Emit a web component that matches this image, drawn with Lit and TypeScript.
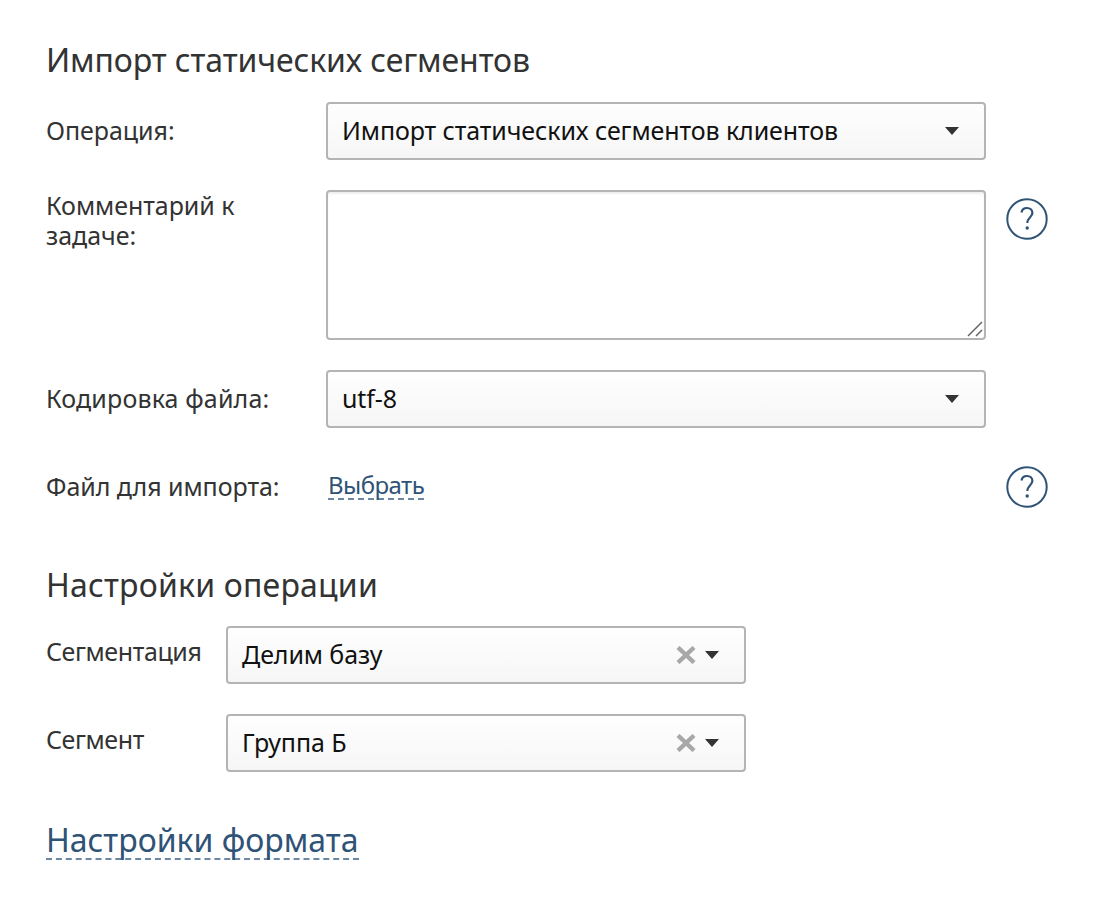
import { LitElement, html, css, svg } from "lit";
import { customElement } from "lit/decorators.js";

const caret = svg`<svg class="caret" width="14" height="8" viewBox="0 0 14 8"><path d="M0 0H14L7 8Z" fill="#333"/></svg>`;
const help = html`<svg class="help" width="42" height="42" viewBox="0 0 42 42">
  <circle cx="21" cy="21" r="19.7" fill="none" stroke="#2f5377" stroke-width="2"/>
  <path d="M15.5 14.5C16 11.5 18.2 10 21 10C24 10 26.4 12 26.4 15C26.4 19 21.3 19.6 21.3 25" fill="none" stroke="#2f5377" stroke-width="2.2"/>
  <circle cx="21.2" cy="30" r="1.7" fill="#2f5377"/>
</svg>`;

@customElement("app-root")
export class AppRoot extends LitElement {
  static styles = css`
    :host { display: block; width: 1096px; height: 914px; background: #fff; overflow: hidden;
      font-family: "Noto Sans", "Open Sans", sans-serif; color: #333; box-sizing: border-box; padding: 38px 0 0 46px; }
    * { box-sizing: border-box; }
    h2 { margin: 0; font-weight: 400; font-size: 32px; line-height: 44px; letter-spacing: -0.1px; }
    .top { display: grid; grid-template-columns: 280px 660px 42px; row-gap: 30px; margin-top: 20px; }
    .label { font-size: 25px; line-height: 30px; letter-spacing: -0.05px; }
    .select { height: 58px; border: 2px solid #b4b4b6; border-radius: 4px; background: linear-gradient(#fefefe, #f6f6f6);
      display: flex; align-items: center; padding: 0 25px 0 14px; color: #111; font-size: 25px; letter-spacing: -0.1px; }
    .select .text { flex: 1; white-space: nowrap; position: relative; top: -1px; }
    .caret { flex: none; }
    .x { flex: none; margin-right: 9px; }
    .textarea { height: 150px; border: 2px solid #b4b4b6; border-radius: 4px; background: #fff; position: relative;
      box-shadow: inset 0 2px 2px #eee; }
    .grip { position: absolute; right: 1px; bottom: 1px; }
    .l1, .file-label { padding-top: 13px; }
    .l3 { padding-top: 13px; letter-spacing: 0.15px; }
    .comment { padding-right: 20px; }
    .helpcell { padding: 8px 0 0 20px; width: 63px; }
    .help { display: block; }
    .link { color: #2f5377; border-bottom: 2px dashed #6b87a3; display: inline-block; font-size: 24px; line-height: 26px; letter-spacing: -0.55px; margin-left: 2px; }
    .file-link { padding-top: 14px; height: 58px; }
    .ops { margin-top: 47px; letter-spacing: 0.2px; }
    .bottom { display: grid; grid-template-columns: 180px 520px; row-gap: 30px; margin-top: 19px; }
    .bottom .label { padding-top: 10px; letter-spacing: -0.4px; }
    .format { margin-top: 49px; }
    .format span { color: #2f5377; display: inline-block; border-bottom: 2px dashed #6b87a3; font-size: 32px; line-height: 37px; }
  `;

  private clear() {
    return html`<svg class="x" width="20" height="18" viewBox="0 0 20 18"><path d="M2 1.5L18 16.5M18 1.5L2 16.5" stroke="#a8a8a8" stroke-width="4.4" fill="none"/></svg>`;
  }

  render() {
    return html`
      <h2>Импорт статических сегментов</h2>
      <div class="top">
        <div class="label l1">Операция:</div>
        <div class="select"><span class="text">Импорт статических сегментов клиентов</span>${caret}</div>
        <div></div>

        <div class="label comment">Комментарий к задаче:</div>
        <div class="textarea">
          <svg class="grip" width="16" height="16" viewBox="0 0 16 16"><path d="M1 15L15 1M9 15L15 9" stroke="#666" stroke-width="1.5" fill="none"/></svg>
        </div>
        <div class="helpcell">${help}</div>

        <div class="label l3">Кодировка файла:</div>
        <div class="select"><span class="text">utf-8</span>${caret}</div>
        <div></div>

        <div class="label file-label">Файл для импорта:</div>
        <div class="file-link"><span class="link">Выбрать</span></div>
        <div class="helpcell">${help}</div>
      </div>
      <h2 class="ops">Настройки операции</h2>
      <div class="bottom">
        <div class="label">Сегментация</div>
        <div class="select"><span class="text">Делим базу</span>${this.clear()}${caret}</div>
        <div class="label">Сегмент</div>
        <div class="select"><span class="text">Группа Б</span>${this.clear()}${caret}</div>
      </div>
      <div class="format"><span>Настройки формата</span></div>
    `;
  }
}
